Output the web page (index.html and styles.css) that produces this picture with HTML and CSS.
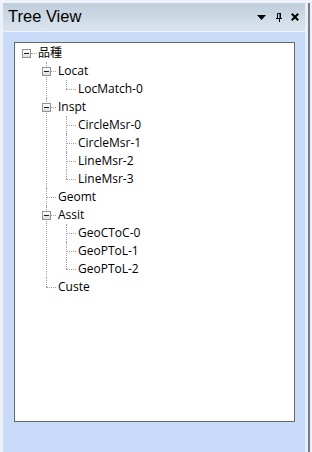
FILE: index.html
```html
<!DOCTYPE html>
<html>
<head>
<meta charset="utf-8">
<link rel="stylesheet" href="styles.css">
</head>
<body>
<div class="frame">
  <div class="panel">
    <div class="header">
      <span class="title">Tree View</span>
      <div class="tools">
        <svg class="ico-drop" width="9" height="5" viewBox="0 0 9 5"><polygon points="0,0 9,0 4.5,5" fill="#000"/></svg>
        <svg class="ico-pin" width="6" height="9" viewBox="0 0 6 9"><path d="M1.5 0.5H4.5V5.5M1.5 0.5V5.5M0 5.5H6M3.5 5.5V9" stroke="#000" stroke-width="1" fill="none"/><rect x="3.5" y="0" width="1.5" height="6" fill="#000"/></svg>
        <svg class="ico-close" width="8" height="8" viewBox="0 0 8 8"><path d="M0.8 0.8L7.2 7.2M7.2 0.8L0.8 7.2" stroke="#000" stroke-width="2" fill="none"/></svg>
      </div>
    </div>
    <div class="body">
      <div class="tree">
        <ul>
          <li>
            <div class="row"><span class="joint"><span class="btn"></span></span><span class="lbl">品種</span></div>
            <ul>
              <li>
                <div class="row"><span class="joint"><span class="btn"></span></span><span class="lbl">Locat</span></div>
                <ul>
                  <li class="last"><div class="row"><span class="joint"></span><span class="lbl">LocMatch-0</span></div></li>
                </ul>
              </li>
              <li>
                <div class="row"><span class="joint"><span class="btn"></span></span><span class="lbl">Inspt</span></div>
                <ul>
                  <li><div class="row"><span class="joint"></span><span class="lbl">CircleMsr-0</span></div></li>
                  <li><div class="row"><span class="joint"></span><span class="lbl">CircleMsr-1</span></div></li>
                  <li><div class="row"><span class="joint"></span><span class="lbl">LineMsr-2</span></div></li>
                  <li class="last"><div class="row"><span class="joint"></span><span class="lbl">LineMsr-3</span></div></li>
                </ul>
              </li>
              <li><div class="row"><span class="joint"></span><span class="lbl">Geomt</span></div></li>
              <li>
                <div class="row"><span class="joint"><span class="btn"></span></span><span class="lbl">Assit</span></div>
                <ul>
                  <li><div class="row"><span class="joint"></span><span class="lbl">GeoCToC-0</span></div></li>
                  <li><div class="row"><span class="joint"></span><span class="lbl">GeoPToL-1</span></div></li>
                  <li class="last"><div class="row"><span class="joint"></span><span class="lbl">GeoPToL-2</span></div></li>
                </ul>
              </li>
              <li class="last"><div class="row"><span class="joint"></span><span class="lbl">Custe</span></div></li>
            </ul>
          </li>
        </ul>
      </div>
    </div>
  </div>
  <div class="edge-light"></div>
  <div class="edge-dark"></div>
</div>
</body>
</html>
```
FILE: styles.css
```css
html, body {
  margin: 0;
  padding: 0;
}
body {
  width: 312px;
  height: 452px;
  overflow: hidden;
  background: #eef1fb;
}
.frame {
  display: flex;
  height: 452px;
  box-sizing: border-box;
  padding: 3px 0 0 3px;
}
.panel {
  width: 302px;
  display: flex;
  flex-direction: column;
  background: #c8dbf9;
}
.edge-light {
  width: 3px;
  background: #e6edfd;
}
.edge-dark {
  width: 2px;
  background: #7c7c7c;
}
.header {
  height: 28px;
  display: flex;
  align-items: center;
  padding: 0 6px 0 5px;
  background: linear-gradient(#bfcedb, #dbe5ee);
  border-bottom: 1px solid #eef3f9;
}
.title {
  font-family: "Liberation Sans", Arial, sans-serif;
  font-size: 16.5px;
  line-height: 26px;
  color: #000;
  margin-top: -2px;
}
.tools {
  margin-left: auto;
  display: flex;
  align-items: center;
}
.tools svg {
  display: block;
}
.ico-drop {
  margin-right: 10px;
}
.ico-pin {
  margin-right: 9px;
}
.body {
  flex: 1;
  padding: 10px 0 0 11px;
}
.tree {
  width: 281px;
  height: 380px;
  box-sizing: border-box;
  border: 1px solid #686868;
  background: #fff;
  padding: 1px 0 0 1px;
}
.tree ul {
  list-style: none;
  margin: 0;
  padding: 0;
}
.tree ul ul {
  margin-left: 20px;
}
.tree li {
  position: relative;
}
.tree ul ul > li::before {
  content: "";
  position: absolute;
  left: 10px;
  top: 0;
  bottom: 0;
  border-left: 1px dotted #a0a0a0;
}
.tree ul ul > li.last::before {
  bottom: auto;
  height: 9px;
}
.row {
  display: flex;
  align-items: center;
  height: 18px;
}
.joint {
  position: relative;
  width: 20px;
  height: 18px;
  flex: none;
}
.joint::after {
  content: "";
  position: absolute;
  left: 10px;
  top: 9px;
  width: 10px;
  border-top: 1px dotted #a0a0a0;
}
.tree > ul > li > .row > .joint::after {
  left: 15px;
  width: 6px;
}
.btn {
  position: absolute;
  left: 6px;
  top: 5px;
  width: 9px;
  height: 9px;
  box-sizing: border-box;
  border: 1px solid #929292;
  background: linear-gradient(#ffffff, #dcdcdc);
  z-index: 1;
}
.btn::after {
  content: "";
  position: absolute;
  left: 1px;
  top: 3px;
  width: 5px;
  height: 1px;
  background: #1a1a1a;
}
.lbl {
  margin-left: 2px;
  font-family: "Open Sans", "Noto Sans CJK TC", sans-serif;
  font-size: 12px;
  line-height: 18px;
  color: #000;
  white-space: nowrap;
}
```
